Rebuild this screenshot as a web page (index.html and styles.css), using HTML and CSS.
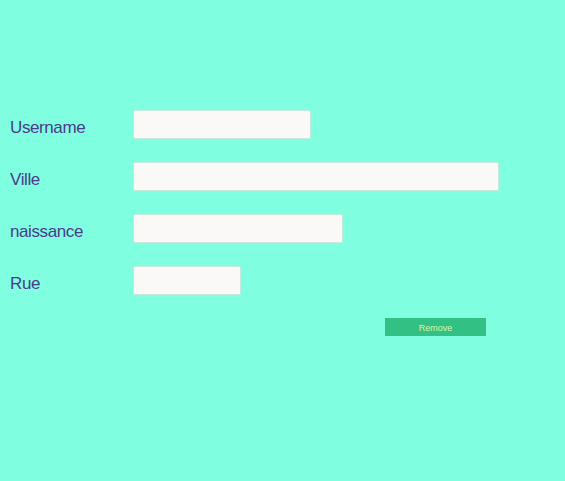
FILE: index.html
```html
<!DOCTYPE html>
<html>
<head>
<meta charset="utf-8">
<link rel="stylesheet" href="styles.css">
</head>
<body>
<form class="form">
  <div class="row"><label class="label">Username</label><input class="field w-user" type="text"></div>
  <div class="row"><label class="label">Ville</label><input class="field w-ville" type="text"></div>
  <div class="row"><label class="label">naissance</label><input class="field w-naiss" type="text"></div>
  <div class="row"><label class="label">Rue</label><input class="field w-rue" type="text"></div>
  <div class="actions"><button class="remove" type="button">Remove</button></div>
</form>
</body>
</html>
```
FILE: styles.css
```css
html, body {
  margin: 0;
  padding: 0;
  background: #7fffe0;
  height: 100%;
}
body {
  font-family: "Liberation Sans", Arial, sans-serif;
}
.form {
  padding: 110px 0 0 10px;
  display: flex;
  flex-direction: column;
  gap: 23px;
}
.row {
  display: flex;
  align-items: center;
  height: 29px;
}
.label {
  width: 123px;
  padding-top: 6px;
  font-size: 17px;
  color: #4b3a8c;
  letter-spacing: -0.4px;
}
.field {
  box-sizing: border-box;
  height: 29px;
  margin: 0;
  padding: 0 6px;
  background: #faf9f7;
  border: 1px solid #c8e8dc;
  border-radius: 2px;
  outline: none;
}
.w-user { width: 178px; }
.w-ville { width: 366px; }
.w-naiss { width: 210px; }
.w-rue { width: 108px; }
.actions {
  display: flex;
  padding-left: 375px;
}
.remove {
  width: 101px;
  height: 18px;
  margin: 0;
  padding: 2px 0 0;
  border: none;
  border-radius: 0;
  background: #33c084;
  color: #d9f7a6;
  font-family: "Liberation Sans", Arial, sans-serif;
  font-size: 9px;
}
```
